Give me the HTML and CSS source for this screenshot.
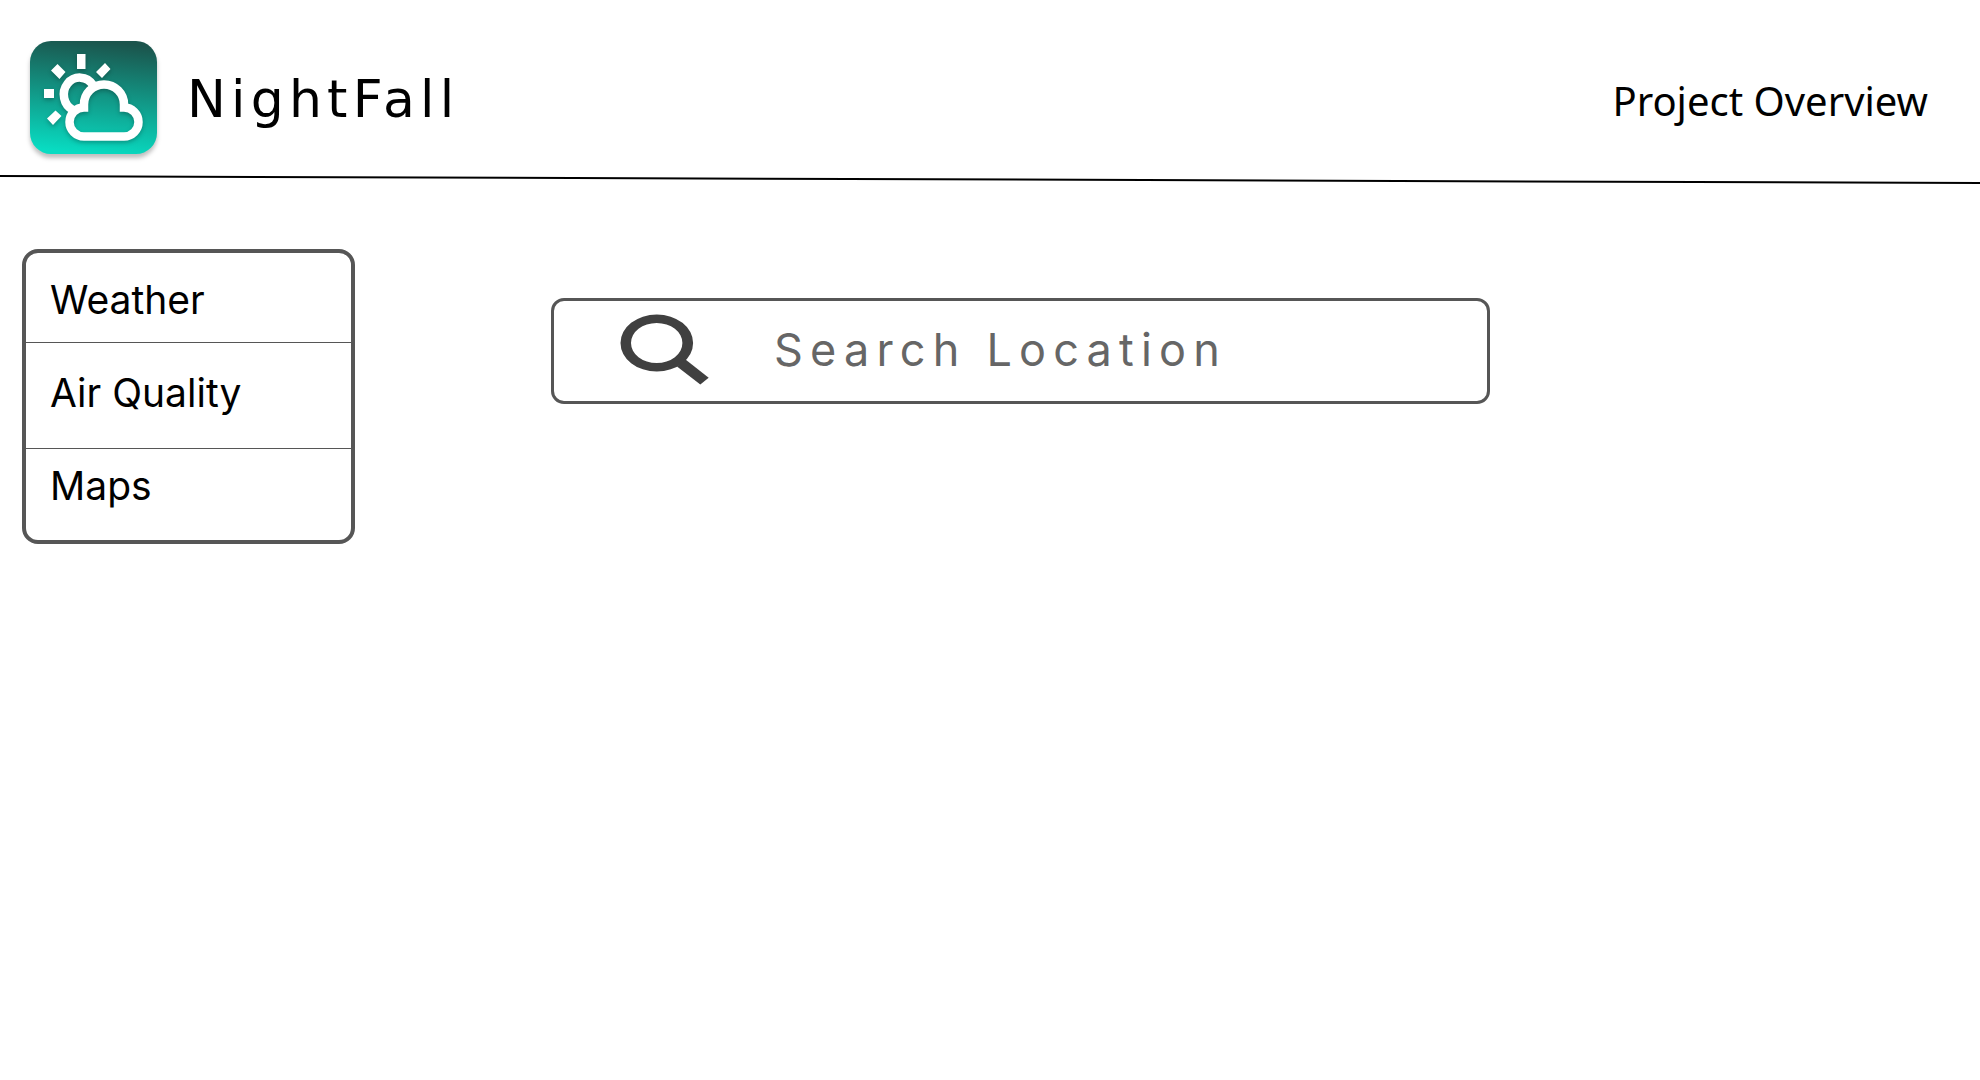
FILE: index.html
```html
<!DOCTYPE html>
<html lang="en">
<head>
  <meta charset="utf-8">
  <meta name="viewport" content="width=device-width, initial-scale=1">
  <title>NightFall</title>
  <link rel="stylesheet" href="styles.css">
</head>
<body>
  <header class="header">
    <div class="header-row">
      <div class="brand">
        <svg class="logo" viewBox="10 11 127 113" aria-hidden="true">
          <defs>
            <linearGradient id="sky" x1="0.56" y1="0" x2="0.44" y2="1">
              <stop offset="0" stop-color="#1b544c"/>
              <stop offset="1" stop-color="#08dcc2"/>
            </linearGradient>
          </defs>
          <rect class="logo-tile" x="10" y="11" width="127" height="113" rx="21" fill="url(#sky)"/>
          <g class="logo-glyph">
            <path d="M57 24h8.500v15h-8.500zM31 40.500l6.500-6.500 8 8-6 7zM76 42l9-9 5.500 6-8.500 9zM24 59h10v9h-10zM27 88.500l8.500-8 6 5.500-8.500 9z" fill="#fff"/>
            <path d="M73 55A16 17 0 1 0 53 80" fill="none" stroke="#fff" stroke-width="8.500"/>
            <path d="M64 106.500a14.500 14.500 0 0 1 0-29V74.500a20 20 0 0 1 40 0V77.500a14.500 14.500 0 0 1 0 29z" fill="none" stroke="#fff" stroke-width="8.500"/>
          </g>
        </svg>
        <h1 class="brand-name">NightFall</h1>
      </div>
      <a class="overview" href="#overview">Project Overview</a>
    </div>
    <svg class="rule" viewBox="0 0 1980 10" preserveAspectRatio="none" aria-hidden="true">
      <path d="M0 2L1980 9" stroke="#000" stroke-width="2"/>
    </svg>
  </header>
  <main class="main">
    <nav class="menu" aria-label="Sections">
      <a class="menu-item first" href="#weather">Weather</a>
      <a class="menu-item" href="#air-quality">Air Quality</a>
      <a class="menu-item last" href="#maps">Maps</a>
    </nav>
    <form class="search" role="search">
      <label for="location">
        <svg class="search-icon" viewBox="0 0 89 71" role="img" aria-label="Search">
          <path fill="#404040" fill-rule="evenodd" d="M0.500 29a36.300 28.500 0 1 0 72.600 0a36.300 28.500 0 1 0-72.600 0zM11 29a25.700 20 0 1 0 51.400 0a25.700 20 0 1 0-51.400 0z"/>
          <path fill="#404040" d="M57 52.500L80.300 70.500L88.700 63.700L65.500 45.500z"/>
        </svg>
      </label>
      <input class="search-input" id="location" type="text" placeholder="Search Location">
    </form>
  </main>
</body>
</html>
```
FILE: styles.css
```css
* {
  box-sizing: border-box;
}

body {
  margin: 0;
  background: #fff;
  color: #000;
  font-family: Inter, "Liberation Sans", sans-serif;
}

.header-row {
  display: flex;
  align-items: center;
  justify-content: space-between;
  padding: 41px 52px 20px 30px;
}

.brand {
  display: flex;
  align-items: center;
  gap: 30px;
}

.logo {
  display: block;
  width: 127px;
  height: 113px;
  overflow: visible;
}

.logo-tile {
  filter: drop-shadow(0 4px 2px rgba(0, 0, 0, 0.25));
}

.logo-glyph {
  filter: drop-shadow(0 2px 2px rgba(0, 0, 0, 0.25));
}

.brand-name {
  margin: 0;
  padding-top: 3px;
  font-family: "DejaVu Sans", sans-serif;
  font-size: 52px;
  font-weight: 400;
  line-height: 60px;
  letter-spacing: 0.1em;
}

.overview {
  padding-top: 6px;
  color: inherit;
  font-family: "Noto Sans", sans-serif;
  font-size: 40px;
  line-height: 56px;
  text-decoration: none;
}

.rule {
  display: block;
  width: 100%;
  height: 10px;
}

.main {
  display: grid;
  grid-template-columns: 333px minmax(0, 939px);
  align-items: start;
  gap: 196px;
  padding: 65px 22px;
}

.menu {
  display: flex;
  flex-direction: column;
  border: 4px solid #565656;
  border-radius: 16px;
}

.menu-item {
  padding: 26px 24px 31px;
  color: inherit;
  font-size: 39px;
  line-height: 48px;
  text-decoration: none;
}

.menu-item + .menu-item {
  border-top: 1px solid #565656;
}

.menu-item.first {
  padding: 23px 24px 18px;
}

.menu-item.last {
  padding: 13px 24px 30px;
}

.search {
  display: flex;
  align-items: center;
  gap: 65px;
  height: 106px;
  margin-top: 49px;
  padding: 0 24px 3px 66px;
  border: 3px solid #565656;
  border-radius: 13px;
}

.search-icon {
  display: block;
  width: 89px;
  height: 71px;
}

.search-input {
  flex: 1;
  min-width: 0;
  padding: 0;
  border: 0;
  outline: 0;
  background: none;
  color: #404040;
  font-family: inherit;
  font-size: 45px;
  line-height: 56px;
  letter-spacing: 0.16em;
}

.search-input::placeholder {
  color: #666;
  opacity: 1;
}
```
